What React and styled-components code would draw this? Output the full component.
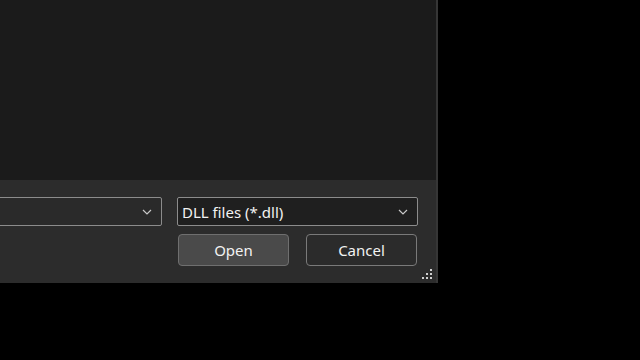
import React from "react";
import styled, { createGlobalStyle } from "styled-components";

const GlobalStyle = createGlobalStyle`
  html, body {
    margin: 0;
    padding: 0;
    background: #000;
    overflow: hidden;
  }
  body {
    font-family: "Noto Sans", "Open Sans", "Liberation Sans", sans-serif;
  }
`;

const Page = styled.div`
  width: 640px;
  height: 360px;
  background: #000;
  overflow: hidden;
`;

const Window = styled.div`
  position: relative;
  width: 700px;
  height: 283px;
  margin-left: -262px;
  display: flex;
  flex-direction: column;
  border-right: 2px solid #363636;
  box-sizing: border-box;
`;

const ContentPane = styled.div`
  height: 180px;
  background: #1b1b1b;
`;

const Footer = styled.div`
  flex: 1;
  background: #2c2c2c;
  display: grid;
  grid-template-columns: 1fr 241px;
  column-gap: 15px;
  row-gap: 8px;
  padding: 17px 18px 16px 0;
  align-content: start;
`;

const Combo = styled.div`
  height: 29px;
  box-sizing: border-box;
  border: 1px solid #8c8c8c;
  border-radius: 2px;
  background: ${(p) => (p.$dark ? "#1f1f1f" : "#2a2a2a")};
  display: flex;
  align-items: center;
  justify-content: space-between;
  padding: 0 9px 0 4px;
  color: #f2f2f2;
  font-size: 15px;
`;

const Buttons = styled.div`
  grid-column: 2;
  display: flex;
  gap: 17px;
  padding-left: 1px;
`;

const Button = styled.button`
  width: 111px;
  height: 32px;
  box-sizing: border-box;
  border-radius: 4px;
  border: 1px solid ${(p) => (p.$primary ? "#6f6f6f" : "#7a7a7a")};
  background: ${(p) => (p.$primary ? "#4a4a4a" : "#2b2b2b")};
  color: #f2f2f2;
  font-family: inherit;
  font-size: 15px;
  padding: 0 0 1px;
`;

const Grip = styled.svg`
  position: absolute;
  right: 3px;
  bottom: 3px;
`;

const Chevron = () => (
  <svg width="10" height="6" viewBox="0 0 10 6">
    <path d="M1 1 L5 5 L9 1" fill="none" stroke="#c8c8c8" strokeWidth="1.2" />
  </svg>
);

export default function App() {
  return (
    <Page>
      <GlobalStyle />
      <Window>
        <ContentPane />
        <Footer>
          <Combo>
            <span />
            <Chevron />
          </Combo>
          <Combo $dark>
            <span>DLL files (*.dll)</span>
            <Chevron />
          </Combo>
          <Buttons>
            <Button $primary>Open</Button>
            <Button>Cancel</Button>
          </Buttons>
        </Footer>
        <Grip width="11" height="11" viewBox="0 0 11 11">
          <g fill="#d0d0d0">
            <rect x="8" y="0" width="2" height="2" />
            <rect x="4" y="4" width="2" height="2" />
            <rect x="8" y="4" width="2" height="2" />
            <rect x="0" y="8" width="2" height="2" />
            <rect x="4" y="8" width="2" height="2" />
            <rect x="8" y="8" width="2" height="2" />
          </g>
        </Grip>
      </Window>
    </Page>
  );
}
